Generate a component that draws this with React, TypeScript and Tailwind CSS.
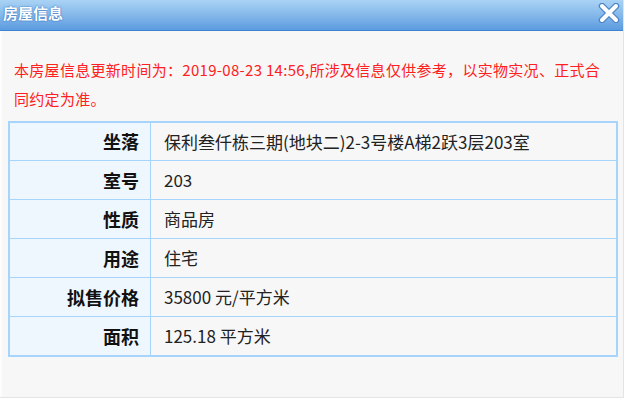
import React from "react";

const rows: [string, string][] = [
  ["坐落", "保利叁仟栋三期(地块二)2-3号楼A梯2跃3层203室"],
  ["室号", "203"],
  ["性质", "商品房"],
  ["用途", "住宅"],
  ["拟售价格", "35800 元/平方米"],
  ["面积", "125.18 平方米"],
];

function CloseIcon() {
  return (
    <svg width="22" height="20" viewBox="0 0 22 20" className="block">
      <path
        d="M4 3 L18 17 M18 3 L4 17"
        stroke="#4a86c8"
        strokeWidth="6.5"
        strokeLinecap="round"
      />
      <path
        d="M4 3 L18 17 M18 3 L4 17"
        stroke="#ffffff"
        strokeWidth="4"
        strokeLinecap="round"
      />
    </svg>
  );
}

export default function App() {
  return (
    <div
      className="w-[625px] h-[401px] bg-white overflow-hidden"
      style={{ fontFamily: '"Noto Sans CJK SC", "Liberation Sans", sans-serif' }}
    >
      <div className="w-[624px] h-[398px] flex flex-col border-r border-b border-[#e4e4e4]">
        {/* Title bar */}
        <div className="h-[31px] flex items-center justify-between pl-[3px] pr-[3px] bg-gradient-to-b from-[#a9d3f4] via-[#85b8ea] to-[#5b9be0] border-b border-[#3f82d0]">
          <span
            className="text-[15px] font-bold text-white leading-none -mt-[5px]"
            style={{ textShadow: "0 0 2px #3a78c0, 0 0 1px #3a78c0" }}
          >
            房屋信息
          </span>
          <span className="-mt-[5px]">
            <CloseIcon />
          </span>
        </div>

        {/* Body */}
        <div className="flex-1 bg-[#f7f7f7] border-l-2 border-[#fdfdfd]">
          <div className="pt-[24px] pl-[12px] text-[15px] leading-[29px] tracking-[0.3px] text-[#ff2020]">
            <div className="whitespace-nowrap">
              本房屋信息更新时间为：2019-08-23 14:56,所涉及信息仅供参考，以实物实况、正式合
            </div>
            <div>同约定为准。</div>
          </div>

          <div className="mt-[8px] ml-[6px] w-[610px] border-2 border-[#a6d4fa]">
            {rows.map(([label, value], i) => (
              <div
                key={label}
                className={`flex ${i > 0 ? "h-[39px] border-t border-[#a6d4fa]" : "h-[37px]"}`}
              >
                <div className="w-[141px] shrink-0 bg-[#eef6fe] border-r border-[#a6d4fa] flex items-center justify-end pr-[11px] text-[18px] font-bold text-[#111]">
                  {label}
                </div>
                <div className="flex-1 flex items-center pl-[13px] text-[17px] text-[#222]">
                  {value}
                </div>
              </div>
            ))}
          </div>
        </div>
      </div>
    </div>
  );
}
